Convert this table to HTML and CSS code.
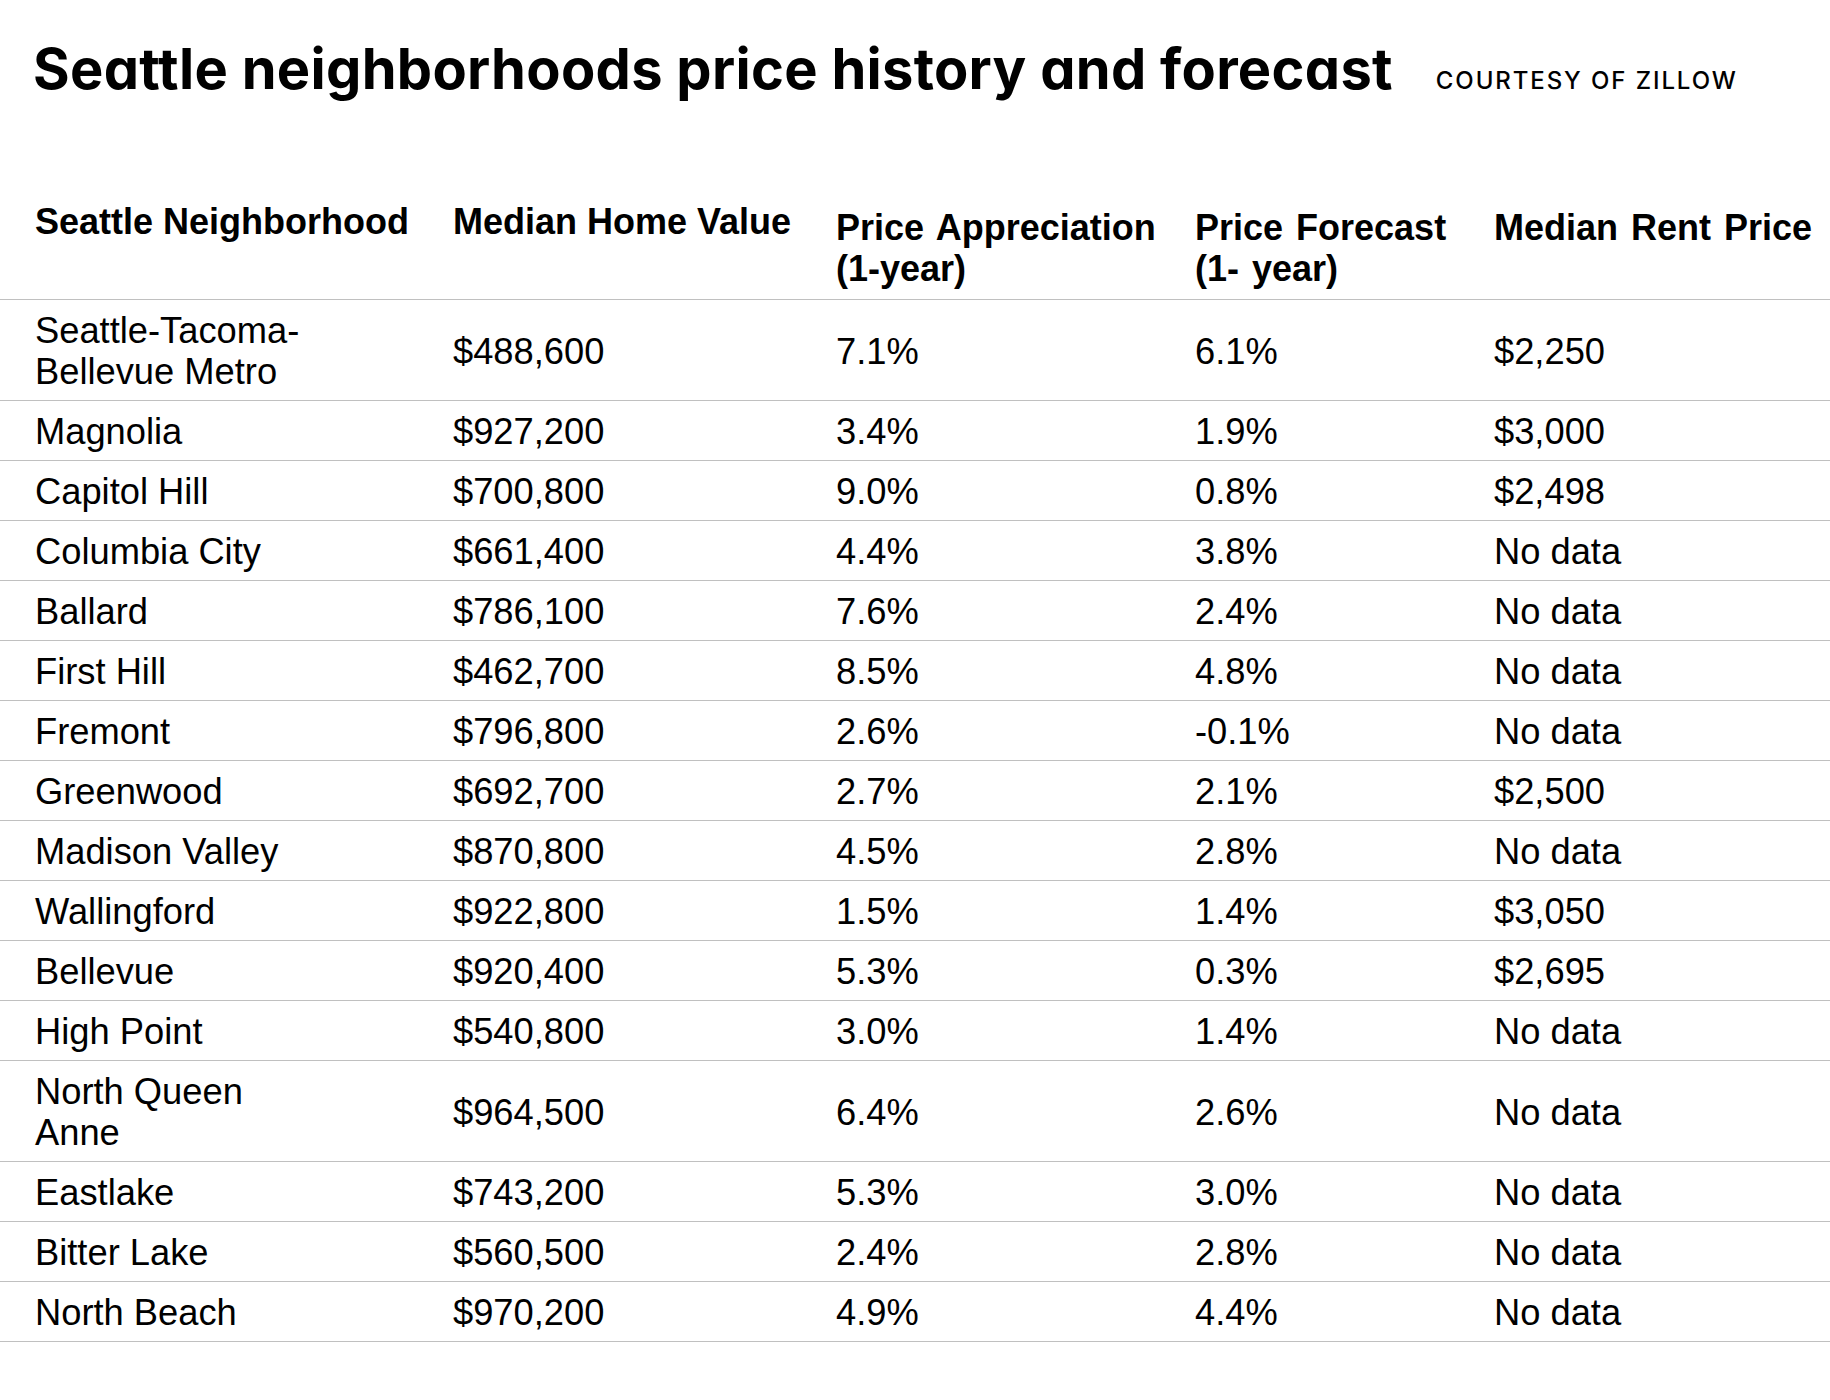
FILE: index.html
```html
<!DOCTYPE html>
<html lang="en">
<head>
<meta charset="utf-8">
<title>Seattle neighborhoods price history and forecast</title>
<link rel="stylesheet" href="styles.css">
</head>
<body>
<header class="head">
  <h1 class="title">Seattle neighborhoods price history and forecast</h1>
  <span class="credit">COURTESY OF ZILLOW</span>
</header>
<table class="data">
  <colgroup>
    <col class="c1"><col class="c2"><col class="c3"><col class="c4"><col class="c5">
  </colgroup>
  <thead>
    <tr>
      <th class="hi">Seattle Neighborhood</th>
      <th class="hi">Median Home Value</th>
      <th class="lo">Price Appreciation<br>(1-year)</th>
      <th class="lo">Price Forecast<br>(1- year)</th>
      <th class="lo">Median Rent Price</th>
    </tr>
  </thead>
  <tbody>
    <tr><td>Seattle-Tacoma-<br>Bellevue Metro</td><td>$488,600</td><td>7.1%</td><td>6.1%</td><td>$2,250</td></tr>
    <tr><td>Magnolia</td><td>$927,200</td><td>3.4%</td><td>1.9%</td><td>$3,000</td></tr>
    <tr><td>Capitol Hill</td><td>$700,800</td><td>9.0%</td><td>0.8%</td><td>$2,498</td></tr>
    <tr><td>Columbia City</td><td>$661,400</td><td>4.4%</td><td>3.8%</td><td>No data</td></tr>
    <tr><td>Ballard</td><td>$786,100</td><td>7.6%</td><td>2.4%</td><td>No data</td></tr>
    <tr><td>First Hill</td><td>$462,700</td><td>8.5%</td><td>4.8%</td><td>No data</td></tr>
    <tr><td>Fremont</td><td>$796,800</td><td>2.6%</td><td>-0.1%</td><td>No data</td></tr>
    <tr><td>Greenwood</td><td>$692,700</td><td>2.7%</td><td>2.1%</td><td>$2,500</td></tr>
    <tr><td>Madison Valley</td><td>$870,800</td><td>4.5%</td><td>2.8%</td><td>No data</td></tr>
    <tr><td>Wallingford</td><td>$922,800</td><td>1.5%</td><td>1.4%</td><td>$3,050</td></tr>
    <tr><td>Bellevue</td><td>$920,400</td><td>5.3%</td><td>0.3%</td><td>$2,695</td></tr>
    <tr><td>High Point</td><td>$540,800</td><td>3.0%</td><td>1.4%</td><td>No data</td></tr>
    <tr><td>North Queen<br>Anne</td><td>$964,500</td><td>6.4%</td><td>2.6%</td><td>No data</td></tr>
    <tr><td>Eastlake</td><td>$743,200</td><td>5.3%</td><td>3.0%</td><td>No data</td></tr>
    <tr><td>Bitter Lake</td><td>$560,500</td><td>2.4%</td><td>2.8%</td><td>No data</td></tr>
    <tr><td>North Beach</td><td>$970,200</td><td>4.9%</td><td>4.4%</td><td>No data</td></tr>
  </tbody>
</table>
</body>
</html>
```

FILE: styles.css
```css
html, body {
  margin: 0;
  padding: 0;
  background: #ffffff;
  color: #000000;
}

.head {
  display: flex;
  align-items: baseline;
  padding: 34px 0 0 33px;
  height: 70px;
}

.title {
  margin: 0;
  font-family: Inter, "Liberation Sans", sans-serif;
  font-feature-settings: "cv11" 1;
  font-weight: 700;
  font-size: 56px;
  line-height: 70px;
  letter-spacing: 0.3px;
  white-space: nowrap;
}

.credit {
  margin-left: 43px;
  font-family: Inter, "Liberation Sans", sans-serif;
  font-weight: 500;
  font-size: 24px;
  line-height: 30px;
  letter-spacing: 1.9px;
  white-space: nowrap;
}

.data {
  margin-top: 76px;
  width: 1830px;
  table-layout: fixed;
  border-collapse: separate;
  border-spacing: 0;
  font-family: "Liberation Sans", Arial, sans-serif;
  font-size: 36.3px;
  line-height: 41px;
}

.c1 { width: 418px; }
.c2 { width: 383px; }
.c3 { width: 359px; }
.c4 { width: 299px; }
.c5 { width: 371px; }

.data th,
.data td {
  padding-left: 35px;
  padding-right: 0;
  text-align: left;
  white-space: nowrap;
  border-bottom: 1px solid #c0c0c0;
}

.data th {
  font-size: 36px;
  font-weight: 700;
  vertical-align: top;
  padding-bottom: 10px;
}

.data th.hi {
  padding-top: 21px;
}

.data th.lo {
  padding-top: 27px;
  word-spacing: 3px;
}

.data td {
  font-weight: 400;
  vertical-align: middle;
  padding-top: 10px;
  padding-bottom: 8px;
}
```
